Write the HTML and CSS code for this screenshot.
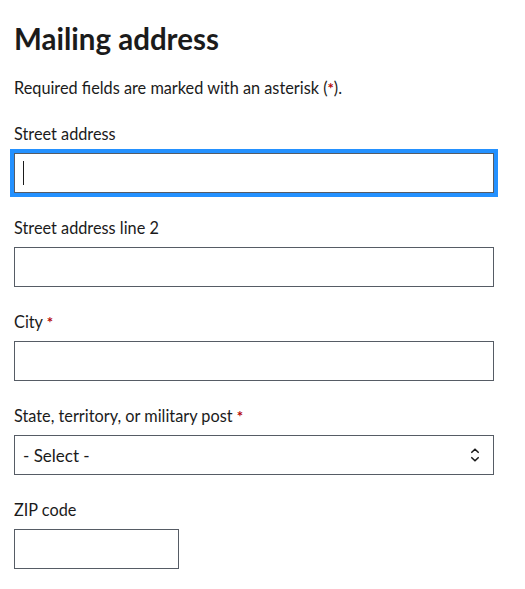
FILE: index.html
```html
<!DOCTYPE html>
<html lang="en">
<head>
<meta charset="utf-8">
<title>Mailing address</title>
<link rel="stylesheet" href="styles.css">
</head>
<body>
<form class="form">
  <fieldset class="fieldset">
    <legend class="legend">Mailing address</legend>
    <p class="hint">Required fields are marked with an asterisk (<abbr class="req" title="required">*</abbr>).</p>

    <label class="label" for="street">Street address</label>
    <div class="input-wrap">
      <input class="input input--focus" id="street" type="text">
      <span class="caret"></span>
    </div>

    <label class="label" for="street2">Street address line 2</label>
    <input class="input" id="street2" type="text">

    <label class="label" for="city">City <abbr class="req" title="required">*</abbr></label>
    <input class="input" id="city" type="text">

    <label class="label" for="state">State, territory, or military post <abbr class="req" title="required">*</abbr></label>
    <div class="select-wrap">
      <select class="input select" id="state">
        <option>- Select -</option>
      </select>
      <svg class="select-icon" width="10" height="16" viewBox="0 0 10 16" aria-hidden="true">
        <path d="M1.8 5.3 L5 2.2 L8.2 5.3" fill="none" stroke="#1b1b1b" stroke-width="1.6" stroke-linecap="round" stroke-linejoin="round"/>
        <path d="M1.8 10.7 L5 13.8 L8.2 10.7" fill="none" stroke="#1b1b1b" stroke-width="1.6" stroke-linecap="round" stroke-linejoin="round"/>
      </svg>
    </div>

    <label class="label" for="zip">ZIP code</label>
    <input class="input input--zip" id="zip" type="text">
  </fieldset>
</form>
</body>
</html>
```
FILE: styles.css
```css
* { box-sizing: border-box; }
html, body { margin: 0; padding: 0; background: #fff; }
body {
  font-family: Lato, "Open Sans", sans-serif;
  color: #1b1b1b;
}
.form { padding: 0 14px; }
.fieldset { border: 0; margin: 0; padding: 0; min-width: 0; }
.legend {
  padding: 0;
  margin: 0;
  padding-top: 21px;
  font-size: 29.5px;
  font-weight: 700;
  line-height: 36px;
}
.hint {
  margin: 20px 0 0;
  font-size: 16.3px;
  line-height: 22px;
}
.req {
  color: #b50909;
  text-decoration: none;
  border: 0;
  font-size: 15px;
  font-weight: 700;
}
.label {
  display: block;
  margin-top: 24px;
  font-size: 16.3px;
  line-height: 22px;
}
.input {
  display: block;
  width: 100%;
  max-width: 480px;
  height: 40px;
  margin-top: 8px;
  border: 1px solid #565c65;
  border-radius: 0;
  background: #fff;
  font-family: inherit;
  font-size: 17px;
  color: #1b1b1b;
  padding: 0 8px;
  appearance: none;
  -webkit-appearance: none;
}
.input-wrap, .select-wrap {
  position: relative;
  max-width: 480px;
  margin-top: 8px;
}
.input-wrap .input, .select-wrap .input { margin-top: 0; }
.input--focus {
  outline: 4px solid #2491ff;
  outline-offset: 0;
}
.caret {
  position: absolute;
  left: 9px;
  top: 8px;
  width: 1px;
  height: 24px;
  background: #1b1b1b;
}
.select { padding-right: 32px; }
.select-icon {
  position: absolute;
  right: 14px;
  top: 12px;
}
.input--zip { width: 165px; }
```
